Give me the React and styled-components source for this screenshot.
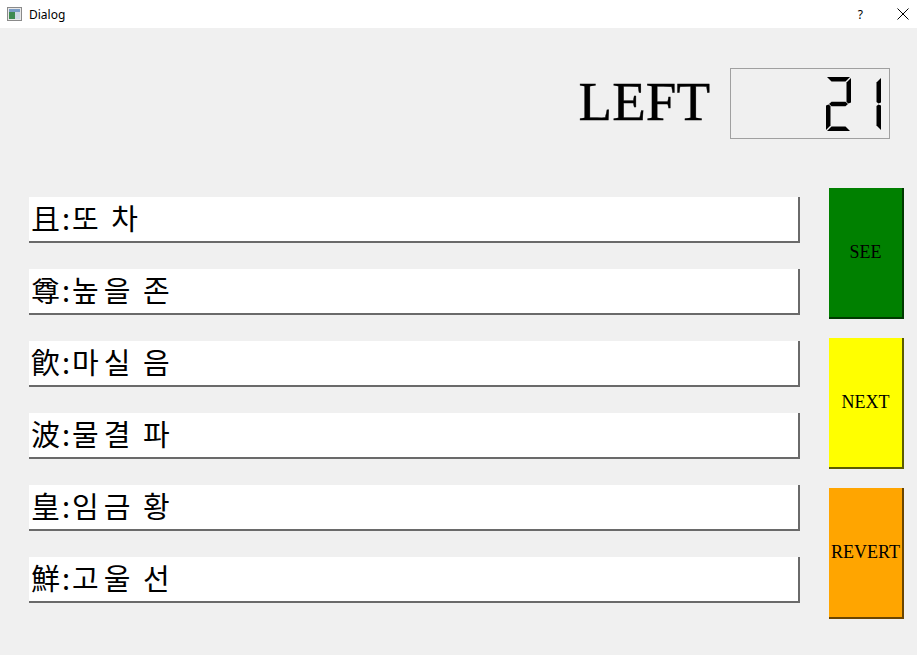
import React from "react";
import styled, { createGlobalStyle } from "styled-components";

const GlobalStyle = createGlobalStyle`
  html, body {
    margin: 0;
    padding: 0;
    background: #f0f0f0;
  }
`;

const words = [
  { hanja: "且", meaning: "또 차" },
  { hanja: "尊", meaning: "높을 존" },
  { hanja: "飮", meaning: "마실 음" },
  { hanja: "波", meaning: "물결 파" },
  { hanja: "皇", meaning: "임금 황" },
  { hanja: "鮮", meaning: "고울 선" },
];

const buttons = [
  { label: "SEE", color: "#008000", shade: "#003a00" },
  { label: "NEXT", color: "#ffff00", shade: "#5c5c00" },
  { label: "REVERT", color: "#ffa500", shade: "#6b4500" },
];

// segments a..g of a seven segment digit, 25 x 54
const SEGMENTS = {
  a: "1,0 24,0 19.5,4.5 5.5,4.5",
  b: "25,1 25,25.5 22.5,26.5 20.5,25 20.5,5.5",
  c: "25,28.5 25,53 20.5,48.5 20.5,29 22.5,27.5",
  d: "1,54 5.5,49.5 19.5,49.5 24,54",
  e: "0,28.5 2.5,27.5 4.5,29 4.5,48.5 0,53",
  f: "0,1 4.5,5.5 4.5,25 2.5,26.5 0,25.5",
  g: "3,27 5.5,24.8 19.5,24.8 22,27 19.5,29.2 5.5,29.2",
};

const DIGITS = {
  0: "abcdef",
  1: "bc",
  2: "abged",
  3: "abgcd",
  4: "fgbc",
  5: "afgcd",
  6: "afgedc",
  7: "abc",
  8: "abcdefg",
  9: "abcdfg",
};

function Lcd({ value }) {
  const chars = String(value).split("");
  const w = chars.length * 30 - 4;
  return (
    <LcdBox>
      <svg width={w} height="56" viewBox={`0 -1 ${w} 56`}>
        {chars.map((ch, i) => (
          <g key={i} transform={`translate(${i * 30} 0)`}>
            {DIGITS[ch].split("").map((s) => (
              <polygon key={s} points={SEGMENTS[s]} fill="#000" />
            ))}
          </g>
        ))}
      </svg>
    </LcdBox>
  );
}

function App() {
  return (
    <Window>
      <GlobalStyle />
      <TitleBar>
        <TitleLeft>
          <svg width="15" height="14" viewBox="0 0 15 14">
            <rect x="0.5" y="0.5" width="14" height="13" fill="#e8e8e8" stroke="#8a8a8a" />
            <rect x="2" y="2" width="11" height="3" fill="#7a9cc6" />
            <rect x="2" y="5" width="6" height="7" fill="#3f8a52" />
            <rect x="8" y="5" width="5" height="7" fill="#cfd8e4" />
          </svg>
          <TitleText>Dialog</TitleText>
        </TitleLeft>
        <TitleControls>
          <HelpMark>?</HelpMark>
          <svg width="12" height="12" viewBox="0 0 12 12">
            <path d="M0.5 0.5 L11.5 11.5 M11.5 0.5 L0.5 11.5" stroke="#000" strokeWidth="1" />
          </svg>
        </TitleControls>
      </TitleBar>

      <Body>
        <CounterRow>
          <LeftText>LEFT</LeftText>
          <Lcd value={21} />
        </CounterRow>

        <MainRow>
          <WordList>
            {words.map((w) => (
              <WordLabel key={w.hanja}>
                <Hanja>{w.hanja}:</Hanja>
                <Meaning>{w.meaning}</Meaning>
              </WordLabel>
            ))}
          </WordList>
          <ButtonColumn>
            {buttons.map((b) => (
              <ActionButton key={b.label} $color={b.color} $shade={b.shade}>
                {b.label}
              </ActionButton>
            ))}
          </ButtonColumn>
        </MainRow>
      </Body>
    </Window>
  );
}

const Window = styled.div`
  width: 917px;
  height: 655px;
  display: flex;
  flex-direction: column;
  background: #f0f0f0;
  overflow: hidden;
`;

const TitleBar = styled.div`
  height: 28px;
  background: #ffffff;
  display: flex;
  align-items: center;
  justify-content: space-between;
  padding: 0 8px 0 7px;
  flex-shrink: 0;
`;

const TitleLeft = styled.div`
  display: flex;
  align-items: center;
  gap: 7px;
`;

const TitleText = styled.span`
  font-family: "Noto Sans", "Liberation Sans", sans-serif;
  font-size: 12px;
  color: #000;
`;

const TitleControls = styled.div`
  display: flex;
  align-items: center;
  gap: 34px;
`;

const HelpMark = styled.span`
  font-family: "Noto Sans", "Liberation Sans", sans-serif;
  font-size: 12px;
  color: #000;
`;

const Body = styled.div`
  flex: 1;
  display: flex;
  flex-direction: column;
  padding: 40px 13px 0 29px;
`;

const CounterRow = styled.div`
  display: flex;
  justify-content: flex-end;
  align-items: center;
  gap: 20px;
  padding-right: 14px;
`;

const LeftText = styled.div`
  font-family: "Liberation Serif", "Times New Roman", serif;
  font-size: 55px;
  line-height: 1;
  color: #000;
  margin-top: -5px;
  -webkit-text-stroke: 0.4px #000;
`;

const LcdBox = styled.div`
  width: 160px;
  height: 71px;
  box-sizing: border-box;
  border: 1px solid #a0a0a0;
  display: flex;
  align-items: center;
  justify-content: flex-end;
  padding-right: 7px;
`;

const MainRow = styled.div`
  display: flex;
  align-items: flex-start;
  gap: 29px;
  margin-top: 49px;
`;

const WordList = styled.div`
  width: 771px;
  display: flex;
  flex-direction: column;
  gap: 26px;
  margin-top: 9px;
`;

const WordLabel = styled.div`
  height: 46px;
  box-sizing: border-box;
  background: #ffffff;
  border-right: 2px solid #6a6a6a;
  border-bottom: 2px solid #6a6a6a;
  display: flex;
  align-items: center;
  padding: 0 0 3px 2px;
  font-family: "Noto Sans CJK KR", sans-serif;
  font-size: 29px;
  font-weight: 400;
  line-height: 1;
  color: #000;
  white-space: pre;
`;

const Hanja = styled.span`
  letter-spacing: 2px;
`;

const Meaning = styled.span`
  letter-spacing: 5px;
  word-spacing: -4px;
`;

const ButtonColumn = styled.div`
  width: 75px;
  display: flex;
  flex-direction: column;
  gap: 19px;
`;

const ActionButton = styled.button`
  height: 131px;
  width: 75px;
  padding: 0;
  box-sizing: border-box;
  background: ${(p) => p.$color};
  border: none;
  border-right: 2px solid ${(p) => p.$shade};
  border-bottom: 2px solid ${(p) => p.$shade};
  font-family: "Liberation Serif", "Times New Roman", serif;
  font-size: 18px;
  color: #000;
  display: flex;
  align-items: center;
  justify-content: center;
  overflow: visible;
  white-space: nowrap;
`;

export default App;
